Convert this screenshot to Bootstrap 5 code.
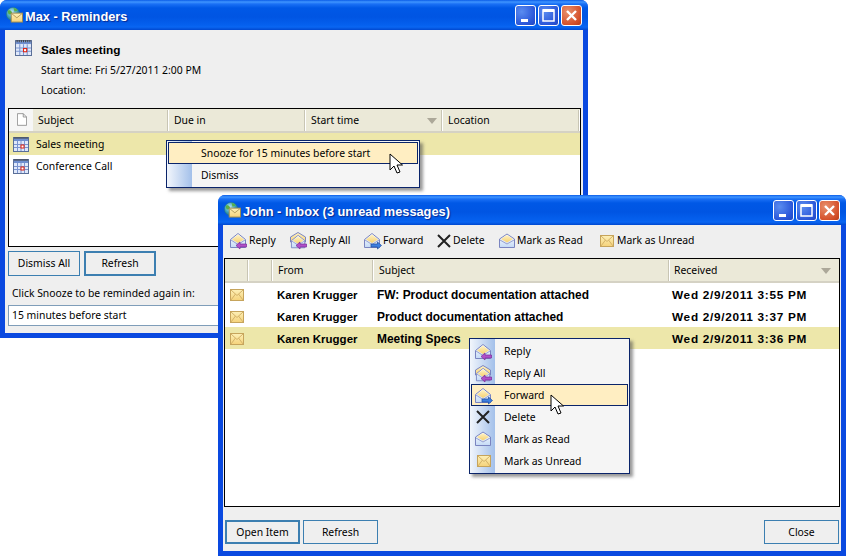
<!DOCTYPE html>
<html lang="en">
<head>
  <meta charset="UTF-8">
  <meta name="viewport" content="width=device-width, initial-scale=1.0">
  <title>Reminders and Inbox</title>
  <link href="https://cdn.jsdelivr.net/npm/bootstrap@5.3.0/dist/css/bootstrap.min.css" rel="stylesheet">
  <style>
    body { background: #fff; font-family: "Noto Sans", "Liberation Sans", sans-serif; font-size: 10.4px; color: #000; overflow: hidden; }
    .desk { width: 846px; height: 556px; }
    .xp-win { background: #efefef; border: solid #0a49e0; border-width: 0 4px 4px 4px; border-radius: 7px 7px 0 0; box-shadow: inset 0 0 0 1px #0a49e0; }
    .win-max { left: 0; top: 0; width: 588px; height: 338px; }
    .win-john { left: 218px; top: 195px; width: 628px; height: 361px; }
    .xp-title { height: 30px; margin: 0 -4px; padding: 0 6px 0 6px; border-radius: 7px 7px 0 0; color: #fff; font: bold 12.8px "Liberation Sans", sans-serif; text-shadow: 1px 1px 1px #0a2a90;
      background: linear-gradient(180deg, #0a5ce8 0, #3f95ff 2px, #1a70f5 4px, #0058e6 8px, #0055e3 17px, #0560ee 25px, #0a66f2 27px, #0048d0 30px); }
    .title-txt { padding-top: 2px; margin-left: 2px; }
    .ctl { width: 21px; height: 21px; border: 1px solid #fff; border-radius: 3px; margin-left: 2px; background: radial-gradient(circle at 30% 30%, #5a8cf0, #2a56d8 70%, #2347c0); }
    .ctl-x { background: radial-gradient(circle at 30% 30%, #e8906c, #d5502a 70%, #b83c18); }
    .ctl svg { display: block; }
    .lst-box { border: 1px solid #000; background: #fff; }
    .lst-head { height: 24px; background: #ebe9d8; border-bottom: 2px solid #d5d2c4; line-height: 20px; flex: none; }
    .hc { height: 21px; margin-top: 1px; padding-left: 5px; border-right: 1px solid #c8c5b4; box-shadow: 1px 0 0 #fff; margin-right: 1px; flex: none; position: relative; }
    .hc-doc { background: #f6f6f6; width: 24px; margin: 0; border: 0; box-shadow: none; padding: 4px 0 0 8px; height: 22px; line-height: 0; }
    .sort-tri { width: 0; height: 0; border: 5px solid transparent; border-top: 6px solid #aca899; border-bottom: 0; right: 4px; top: 8px; }
    .rw { height: 22px; line-height: 22px; }
    .rw-sel { background: #ede7aa; }
    .cal-ico { margin: 3px 7px 0 4px; flex: none; display: block; }
    .xp-btn { height: 25px; width: 72px; padding: 0; border: 1px solid #3c7fb1; border-radius: 0; background: #efefef; color: #000; font-size: 10.4px; line-height: 21px; }
    .xp-btn-def { border-width: 2px; }
    .sz-75 { width: 75px; height: 24px; }
    .snooze-inp { height: 21px; border: 1px solid #7f9db9; background: #fff; padding: 0 3px; line-height: 18px; margin: 0 3px 0 4px; }
    .head-ico { left: 11px; top: 9px; }
    .info-row { height: 20px; line-height: 20px; padding-left: 37px; }
    .info-lbl { width: 54px; }
    .sales-t { margin-top: 10px; font-size: 11.7px; }
    .tb-row { height: 33px; padding-left: 8px; flex: none; }
    .tb-item { height: 33px; padding-bottom: 2px; flex: none; white-space: nowrap; }
    .tb-item svg { margin-right: 1px; }
    .tb-item .ic-gap { margin-right: 3px; }
    .tb-item .ic-gap2 { margin-right: 2px; }
    .t1 { width: 60px; } .t2 { width: 74px; } .t3 { width: 72px; } .t4 { width: 63px; } .t5 { width: 101px; } .t6 { width: 100px; }
    .ctx { padding: 1px; background: #f5f5f5; border: 1px solid #0a246a; border-radius: 0; min-width: 0; box-shadow: 3px 3px 3px rgba(70,70,70,.55); margin: 0; z-index: 5; }
    .ctx-gutter { left: 0; top: 0; bottom: 0; width: 25px; background: linear-gradient(90deg, #f2f6fc, #a3c0ea); }
    .ctx .dropdown-item { height: 22px; padding: 0 0 0 32px; line-height: 20px; font-size: 10.4px; color: #000; border: 1px solid transparent; position: relative; background: none; }
    .ctx .ctx-hot { background: #ffeec2; border-color: #0a246a; }
    .ctx-ico { left: 3px; top: 2px; }
    .env-mi { left: 5px; top: 4px; }
    .ctx-one { left: 166px; top: 140px; width: 254px; display: block; }
    .ctx-two { left: 469px; top: 338px; width: 161px; display: block; }
    .ptr { z-index: 9; }
    .ptr-one { left: 389px; top: 153px; }
    .ptr-two { left: 550px; top: 394px; }
    .bold-rw { font-weight: 700; font-family: "Liberation Sans", sans-serif; font-size: 11.8px; }
    .svg-defs { position: absolute; width: 0; height: 0; }
    .flex-none { flex: none; }
    .lst-one { height: 139px; margin: 8px 3px 0 4px; }
    .c1a { width: 135px; }
    .c1b { width: 136px; }
    .btns-one { margin: 4px 0 0 4px; }
    .snooze-lbl { margin: 8px 0 0 8px; height: 21px; line-height: 18px; }
    .lst-two { height: 249px; margin: 0 2px; }
    .c2a { width: 23px; }
    .c2b { width: 100px; }
    .c2c { width: 295px; }
    .c2d { width: 165px; padding-left: 4px; border-right: 0; box-shadow: none; }
    .rw-mail > div { padding-top: 1px; }
    .m-a { width: 52px; padding-left: 5px; margin-top: -1px; flex: none; }
    .m-b { width: 100px; flex: none; font-size: 11.5px; }
    .m-c { width: 295px; flex: none; font-size: 11.95px; }
    .m-d { letter-spacing: .7px; }
    .btns-two { margin: 13px 3px 0 3px; }
    .ms-btn { margin-left: 3px; }
  </style>
</head>
<body>

<svg class="svg-defs" aria-hidden="true">
  <defs>
    <linearGradient id="envG" x1="0" y1="0" x2="0" y2="1"><stop offset="0" stop-color="#fdf0b8"/><stop offset="1" stop-color="#f5d27a"/></linearGradient>
    <linearGradient id="flapG" x1="0" y1="0" x2="0" y2="1"><stop offset="0" stop-color="#fff4c8"/><stop offset="1" stop-color="#f6d070"/></linearGradient>
    <linearGradient id="bodyG" x1="0" y1="0" x2="0" y2="1"><stop offset="0" stop-color="#fff"/><stop offset="1" stop-color="#c4daf6"/></linearGradient>
    <radialGradient id="globeG" cx=".4" cy=".35" r=".7"><stop offset="0" stop-color="#bfe8f8"/><stop offset=".6" stop-color="#3c9fb8"/><stop offset="1" stop-color="#1a6a80"/></radialGradient>
    <symbol id="i-cal" viewBox="0 0 16 16">
      <rect x=".5" y="1.5" width="15" height="14" fill="#fff" stroke="#5a6f98"/>
      <rect x="1" y="2" width="14" height="3" fill="#6f8fd0"/>
      <path d="M2 1v2M4 1v2M6 1v2M8 1v2M10 1v2M12 1v2M14 1v2" stroke="#444" stroke-width="1"/>
      <path d="M1 5h14v10H1z" fill="#dfe8fa"/>
      <path d="M1 8.500h14M1 11.500h14M4.500 5v10M8 5v10M11.500 5v10" stroke="#7a94d0" stroke-width="1" fill="none"/>
      <rect x="8" y="9" width="3" height="3" fill="#fff" stroke="#e02010"/>
    </symbol>
    <symbol id="i-env" viewBox="0 0 14 12">
      <rect x=".5" y=".5" width="13" height="11" fill="url(#envG)" stroke="#c6a45c"/>
      <path d="M1 1l6 5.500L13 1M1 11l4.500-6M13 11L8.500 5" fill="none" stroke="#d4b268"/>
    </symbol>
    <symbol id="i-open" viewBox="0 0 18 18">
      <path d="M.5 7.500L8 1.500l7.500 6v8H.5z" fill="url(#bodyG)" stroke="#7a84c0"/>
      <path d="M2 7.500L8 2.500l6 5-6 3.500z" fill="url(#flapG)"/>
      <path d="M1 8l7 4.500L15 8" fill="none" stroke="#98a0d0"/>
    </symbol>
    <symbol id="i-reply" viewBox="0 0 18 18">
      <use href="#i-open" width="18" height="18"/>
      <path d="M6 13.500l4-3.500v2h6.500v3H10v2z" fill="#b050c8" stroke="#7a2a98" stroke-width=".7"/>
    </symbol>
    <symbol id="i-replyall" viewBox="0 0 18 18">
      <path d="M.5 5L8 .5 15.500 5v5H.5z" fill="url(#flapG)" stroke="#7a84c0"/>
      <g transform="translate(0 2)"><use href="#i-open" width="18" height="16"/></g>
      <path d="M6 13.500l4-3.500v2h6.500v3H10v2z" fill="#b050c8" stroke="#7a2a98" stroke-width=".7"/>
    </symbol>
    <symbol id="i-fwd" viewBox="0 0 18 18">
      <use href="#i-open" width="18" height="18"/>
      <path d="M17.500 13.500l-4-3.500v2H7v3h6.500v2z" fill="#3f80e0" stroke="#1c4a9c" stroke-width=".7"/>
    </symbol>
    <symbol id="i-del" viewBox="0 0 16 16">
      <path d="M2 2l12 12M14 2L2 14" stroke="#222" stroke-width="2"/>
    </symbol>
    <symbol id="i-read" viewBox="0 0 16 16">
      <path d="M.5 6L8 1l7.500 5v8.500H.5z" fill="url(#bodyG)" stroke="#7a84c0"/>
      <path d="M2 6l6-4 6 4-6 3.500z" fill="url(#flapG)"/>
      <path d="M1 7l7 4 7-4" fill="none" stroke="#98a0d0"/>
    </symbol>
    <symbol id="i-app" viewBox="0 0 18 17">
      <circle cx="7.500" cy="7.500" r="7" fill="url(#globeG)" stroke="#2f7f70" stroke-width=".5"/>
      <path d="M2 4c2-1 3 0 4 1s0 3-2 3-2-2-2-4zM8 1c2 0 4 1 4 3l-3 1z" fill="#58b048"/>
      <rect x="5.500" y="6.500" width="12" height="9.500" fill="url(#envG)" stroke="#9c8a50"/>
      <path d="M6 7l5.500 4.500L17 7" fill="none" stroke="#b09a58"/>
    </symbol>
    <symbol id="i-ptr" viewBox="0 0 14 22">
      <path d="M1 1v16l4-4 3 7 3-1-3-7h5.500z" fill="#fff" stroke="#000" stroke-width="1"/>
    </symbol>
    <symbol id="i-doc" viewBox="0 0 12 15">
      <path d="M.5.5h7l4 4v10H.5z" fill="#fff" stroke="#888"/>
      <path d="M7.500.5v4h4" fill="none" stroke="#888"/>
    </symbol>
  </defs>
</svg>

<div class="desk position-relative">

  <!-- Reminders window -->
  <div class="xp-win win-max position-absolute d-flex flex-column">
    <div class="xp-title d-flex align-items-center flex-none">
      <svg width="17" height="16"><use href="#i-app"/></svg>
      <span class="flex-grow-1 title-txt">Max - Reminders</span>
      <span class="ctl"><svg width="19" height="19"><rect x="5" y="13" width="7" height="3" fill="#fff"/></svg></span>
      <span class="ctl"><svg width="19" height="19"><path d="M4 4h11v11H4z" fill="none" stroke="#fff" stroke-width="1.500"/><path d="M4 4.500h11" stroke="#fff" stroke-width="3"/></svg></span>
      <span class="ctl ctl-x"><svg width="19" height="19"><path d="M5 5l9 9M14 5l-9 9" stroke="#fff" stroke-width="2.400"/></svg></span>
    </div>
    <div class="position-relative">
      <svg class="position-absolute head-ico" width="17" height="17"><use href="#i-cal"/></svg>
      <div class="info-row bold-rw sales-t">Sales meeting</div>
      <div class="info-row d-flex"><span class="info-lbl">Start time:</span><span>Fri 5/27/2011 2:00 PM</span></div>
      <div class="info-row">Location:</div>
    </div>
    <div class="lst-box lst-one d-flex flex-column">
      <div class="lst-head d-flex">
        <div class="hc hc-doc"><svg width="10" height="13"><use href="#i-doc"/></svg></div>
        <div class="hc c1a">Subject</div>
        <div class="hc c1b">Due in</div>
        <div class="hc c1b">Start time<span class="sort-tri position-absolute"></span></div>
        <div class="hc c1b">Location</div>
      </div>
      <div class="rw rw-sel d-flex"><svg class="cal-ico" width="16" height="16"><use href="#i-cal"/></svg>Sales meeting</div>
      <div class="rw d-flex"><svg class="cal-ico" width="16" height="16"><use href="#i-cal"/></svg>Conference Call</div>
    </div>
    <div class="d-flex gap-1 btns-one">
      <button class="btn xp-btn" type="button">Dismiss All</button>
      <button class="btn xp-btn xp-btn-def" type="button">Refresh</button>
    </div>
    <div class="snooze-lbl">Click Snooze to be reminded again in:</div>
    <div class="snooze-inp">15 minutes before start</div>
  </div>

  <!-- Snooze menu -->
  <div class="dropdown-menu ctx ctx-one position-absolute">
    <span class="ctx-gutter position-absolute"></span>
    <a class="dropdown-item ctx-hot" href="#">Snooze for 15 minutes before start</a>
    <a class="dropdown-item" href="#">Dismiss</a>
  </div>
  <svg class="position-absolute ptr ptr-one" width="14" height="22"><use href="#i-ptr"/></svg>

  <!-- Inbox window -->
  <div class="xp-win win-john position-absolute d-flex flex-column">
    <div class="xp-title d-flex align-items-center flex-none">
      <svg width="17" height="16"><use href="#i-app"/></svg>
      <span class="flex-grow-1 title-txt">John - Inbox (3 unread messages)</span>
      <span class="ctl"><svg width="19" height="19"><rect x="5" y="13" width="7" height="3" fill="#fff"/></svg></span>
      <span class="ctl"><svg width="19" height="19"><path d="M4 4h11v11H4z" fill="none" stroke="#fff" stroke-width="1.500"/><path d="M4 4.500h11" stroke="#fff" stroke-width="3"/></svg></span>
      <span class="ctl ctl-x"><svg width="19" height="19"><path d="M5 5l9 9M14 5l-9 9" stroke="#fff" stroke-width="2.400"/></svg></span>
    </div>
    <div class="d-flex tb-row">
      <div class="tb-item t1 d-flex align-items-center"><svg width="18" height="18"><use href="#i-reply"/></svg>Reply</div>
      <div class="tb-item t2 d-flex align-items-center"><svg width="18" height="18"><use href="#i-replyall"/></svg>Reply All</div>
      <div class="tb-item t3 d-flex align-items-center"><svg width="18" height="18"><use href="#i-fwd"/></svg>Forward</div>
      <div class="tb-item t4 d-flex align-items-center"><svg width="16" height="16"><use href="#i-del"/></svg>Delete</div>
      <div class="tb-item t5 d-flex align-items-center"><svg width="16" height="16" class="ic-gap2"><use href="#i-read"/></svg>Mark as Read</div>
      <div class="tb-item t6 d-flex align-items-center"><svg width="14" height="12" class="ic-gap"><use href="#i-env"/></svg>Mark as Unread</div>
    </div>
    <div class="lst-box lst-two d-flex flex-column">
      <div class="lst-head d-flex">
        <div class="hc c2a"></div>
        <div class="hc c2a"></div>
        <div class="hc c2b">From</div>
        <div class="hc c2c">Subject</div>
        <div class="hc c2d">Received<span class="sort-tri position-absolute"></span></div>
      </div>
      <div class="rw rw-mail bold-rw d-flex"><div class="m-a"><svg width="14" height="12"><use href="#i-env"/></svg></div><div class="m-b">Karen Krugger</div><div class="m-c">FW: Product documentation attached</div><div class="m-d">Wed 2/9/2011 3:55 PM</div></div>
      <div class="rw rw-mail bold-rw d-flex"><div class="m-a"><svg width="14" height="12"><use href="#i-env"/></svg></div><div class="m-b">Karen Krugger</div><div class="m-c">Product documentation attached</div><div class="m-d">Wed 2/9/2011 3:37 PM</div></div>
      <div class="rw rw-mail rw-sel bold-rw d-flex"><div class="m-a"><svg width="14" height="12"><use href="#i-env"/></svg></div><div class="m-b">Karen Krugger</div><div class="m-c">Meeting Specs</div><div class="m-d">Wed 2/9/2011 3:36 PM</div></div>
    </div>
    <div class="d-flex btns-two">
      <button class="btn xp-btn xp-btn-def sz-75" type="button">Open Item</button>
      <button class="btn xp-btn sz-75 ms-btn" type="button">Refresh</button>
      <button class="btn xp-btn sz-75 ms-auto" type="button">Close</button>
    </div>
  </div>

  <!-- Message menu -->
  <div class="dropdown-menu ctx ctx-two position-absolute">
    <span class="ctx-gutter position-absolute"></span>
    <a class="dropdown-item" href="#"><svg class="ctx-ico position-absolute" width="18" height="18"><use href="#i-reply"/></svg>Reply</a>
    <a class="dropdown-item" href="#"><svg class="ctx-ico position-absolute" width="18" height="18"><use href="#i-replyall"/></svg>Reply All</a>
    <a class="dropdown-item ctx-hot" href="#"><svg class="ctx-ico position-absolute" width="18" height="18"><use href="#i-fwd"/></svg>Forward</a>
    <a class="dropdown-item" href="#"><svg class="ctx-ico position-absolute" width="16" height="16"><use href="#i-del"/></svg>Delete</a>
    <a class="dropdown-item" href="#"><svg class="ctx-ico position-absolute" width="16" height="16"><use href="#i-read"/></svg>Mark as Read</a>
    <a class="dropdown-item" href="#"><svg class="ctx-ico position-absolute env-mi" width="14" height="12"><use href="#i-env"/></svg>Mark as Unread</a>
  </div>
  <svg class="position-absolute ptr ptr-two" width="14" height="22"><use href="#i-ptr"/></svg>
</div>

</body>
</html>
